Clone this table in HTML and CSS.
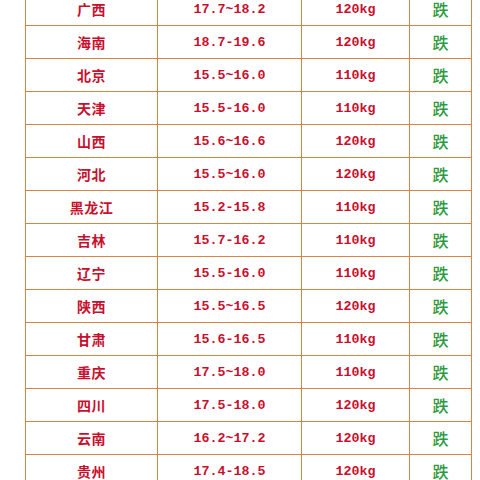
FILE: index.html
```html
<!DOCTYPE html>
<html lang="zh">
<head>
<meta charset="utf-8">
<link rel="stylesheet" href="styles.css">
</head>
<body>
<table class="price-table">
<tbody>
<tr><td class="prov">广西</td><td class="num">17.7~18.2</td><td class="num">120kg</td><td class="trend">跌</td></tr>
<tr><td class="prov">海南</td><td class="num">18.7-19.6</td><td class="num">120kg</td><td class="trend">跌</td></tr>
<tr><td class="prov">北京</td><td class="num">15.5~16.0</td><td class="num">110kg</td><td class="trend">跌</td></tr>
<tr><td class="prov">天津</td><td class="num">15.5-16.0</td><td class="num">110kg</td><td class="trend">跌</td></tr>
<tr><td class="prov">山西</td><td class="num">15.6~16.6</td><td class="num">120kg</td><td class="trend">跌</td></tr>
<tr><td class="prov">河北</td><td class="num">15.5~16.0</td><td class="num">120kg</td><td class="trend">跌</td></tr>
<tr><td class="prov">黑龙江</td><td class="num">15.2-15.8</td><td class="num">110kg</td><td class="trend">跌</td></tr>
<tr><td class="prov">吉林</td><td class="num">15.7-16.2</td><td class="num">110kg</td><td class="trend">跌</td></tr>
<tr><td class="prov">辽宁</td><td class="num">15.5-16.0</td><td class="num">110kg</td><td class="trend">跌</td></tr>
<tr><td class="prov">陕西</td><td class="num">15.5~16.5</td><td class="num">120kg</td><td class="trend">跌</td></tr>
<tr><td class="prov">甘肃</td><td class="num">15.6-16.5</td><td class="num">110kg</td><td class="trend">跌</td></tr>
<tr><td class="prov">重庆</td><td class="num">17.5~18.0</td><td class="num">110kg</td><td class="trend">跌</td></tr>
<tr><td class="prov">四川</td><td class="num">17.5-18.0</td><td class="num">120kg</td><td class="trend">跌</td></tr>
<tr><td class="prov">云南</td><td class="num">16.2~17.2</td><td class="num">120kg</td><td class="trend">跌</td></tr>
<tr><td class="prov">贵州</td><td class="num">17.4-18.5</td><td class="num">120kg</td><td class="trend">跌</td></tr>
</tbody>
</table>
</body>
</html>
```
FILE: styles.css
```css
html, body {
  margin: 0;
  padding: 0;
  background: #ffffff;
}
body {
  overflow: hidden;
  height: 480px;
}
.price-table {
  border-collapse: collapse;
  margin: -8px 0 0 25px;
  table-layout: fixed;
  width: 446px;
}
.price-table tr {
  height: 33px;
}
.price-table td {
  border: 1px solid #dc8344;
  height: 33px;
  padding: 0;
  text-align: center;
  vertical-align: middle;
  box-sizing: border-box;
}
.price-table td:nth-child(1) { width: 132px; }
.price-table td:nth-child(2) { width: 144px; }
.price-table td:nth-child(3) { width: 108px; }
.price-table td:nth-child(4) { width: 62px; }
.prov {
  font-family: "Noto Sans CJK SC", sans-serif;
  font-weight: 700;
  font-size: 14px;
  letter-spacing: 0.5px;
  color: #c8102e;
}
.num {
  font-family: "Liberation Mono", monospace;
  font-weight: 700;
  font-size: 13.3px;
  color: #c8102e;
}
.trend {
  font-family: "Noto Sans CJK SC", sans-serif;
  font-weight: 500;
  font-size: 16px;
  color: #2f9a3c;
}
```
